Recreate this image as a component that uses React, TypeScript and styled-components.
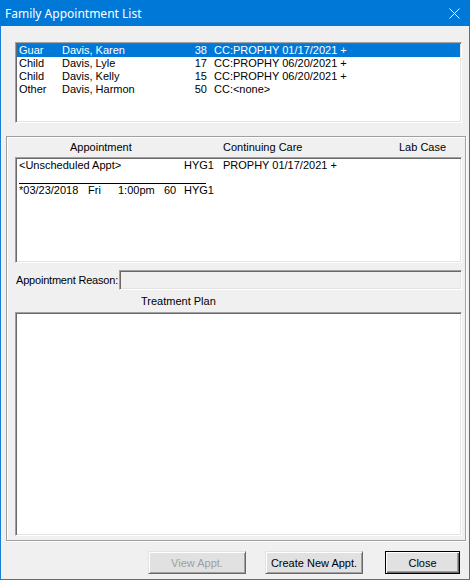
import React from 'react';
import styled, { createGlobalStyle } from 'styled-components';

const GlobalStyle = createGlobalStyle`
  html, body { margin: 0; padding: 0; background: #f0f0f0; }
  body { font-family: "Liberation Sans", Arial, sans-serif; font-size: 11px; color: #000; }
`;

const Window = styled.div`
  width: 470px;
  height: 580px;
  box-sizing: border-box;
  border: 1px solid #1a7fd4;
  border-top: none;
  background: #f0f0f0;
  display: flex;
  flex-direction: column;
`;

const TitleBar = styled.div`
  height: 26px;
  margin: 0 -1px;
  background: #0078d7;
  color: #fff;
  display: flex;
  align-items: center;
  justify-content: space-between;
  padding: 0 10px 0 5px;
  font-family: "Noto Sans", "Open Sans", sans-serif;
  font-size: 12px;
  flex-shrink: 0;
`;

const CloseGlyph = styled.svg`
  width: 11px;
  height: 11px;
`;

const Body = styled.div`
  display: flex;
  flex-direction: column;
  padding-top: 16px;
`;

// sunken 2px client-edge used by every list and edit box
const Sunken = styled.div<{ $w?: number; $h: number; $bg?: string }>`
  box-sizing: border-box;
  width: ${(p) => (p.$w ? `${p.$w}px` : 'auto')};
  height: ${(p) => p.$h}px;
  background: ${(p) => p.$bg ?? '#fff'};
  border: 1px solid;
  border-color: #a0a0a0 #fff #fff #a0a0a0;
  box-shadow: inset 1px 1px 0 #696969, inset -1px -1px 0 #e3e3e3;
  padding: 1px;
  overflow: hidden;
`;

const FamilyList = styled(Sunken)`
  margin-left: 14px;
`;

const Row = styled.div<{ $selected?: boolean }>`
  display: flex;
  height: 13px;
  line-height: 13px;
  white-space: nowrap;
  padding-left: 2px;
  background: ${(p) => (p.$selected ? '#0078d7' : 'transparent')};
  color: ${(p) => (p.$selected ? '#fff' : '#000')};
`;

const Cell = styled.span<{ $w?: number; $right?: boolean; $pad?: number }>`
  display: inline-block;
  width: ${(p) => (p.$w ? `${p.$w}px` : 'auto')};
  padding-left: ${(p) => p.$pad ?? 0}px;
  text-align: ${(p) => (p.$right ? 'right' : 'left')};
  flex-shrink: 0;
`;

const GroupBox = styled.div`
  box-sizing: border-box;
  width: 460px;
  height: 405px;
  margin: 13px 0 0 5px;
  border: 1px solid #a0a0a0;
  box-shadow: inset 1px 1px 0 #fff, 1px 1px 0 #fff;
  padding: 0 0 0 8px;
  display: flex;
  flex-direction: column;
`;

const HeaderRow = styled.div`
  display: flex;
  height: 20px;
  padding-top: 4px;
  box-sizing: border-box;
  line-height: 13px;
  white-space: nowrap;
`;

const ApptList = styled(Sunken)`
  padding: 1px;
`;

const Separator = styled.div`
  width: 187px;
  height: 1px;
  background: #000;
  margin: 11px 0 0 2px;
`;

const ReasonRow = styled.div`
  display: flex;
  align-items: center;
  width: 447px;
  margin-top: 7px;
`;

const ReasonLabel = styled.span`
  line-height: 13px;
  white-space: nowrap;
  padding: 1px 1px 0 1px;
  letter-spacing: -0.2px;
`;

const ReasonBox = styled(Sunken)`
  flex: 1;
`;

const PlanLabel = styled.div`
  height: 22px;
  box-sizing: border-box;
  padding: 5px 0 0 126px;
  line-height: 13px;
`;

const ButtonBar = styled.div`
  display: flex;
  margin: 10px 0 0 147px;
`;

const Button = styled.button<{ $w: number; $gap?: number; $default?: boolean }>`
  box-sizing: border-box;
  width: ${(p) => p.$w}px;
  height: 23px;
  margin-left: ${(p) => p.$gap ?? 0}px;
  padding: 0;
  background: #e1e1e1;
  font-family: "Liberation Sans", Arial, sans-serif;
  font-size: 11px;
  color: #000;
  border: 1px solid;
  border-color: ${(p) => (p.$default ? '#000' : '#e3e3e3 #696969 #696969 #e3e3e3')};
  box-shadow: ${(p) =>
    p.$default
      ? 'inset 1px 1px 0 #fff, inset -1px -1px 0 #696969, inset -2px -2px 0 #a0a0a0'
      : 'inset 1px 1px 0 #fff, inset -1px -1px 0 #a0a0a0'};
  &:disabled { color: #a0a0a0; }
`;

const members = [
  { rel: 'Guar', name: 'Davis, Karen', age: 38, cc: 'CC:PROPHY 01/17/2021 +' },
  { rel: 'Child', name: 'Davis, Lyle', age: 17, cc: 'CC:PROPHY 06/20/2021 +' },
  { rel: 'Child', name: 'Davis, Kelly', age: 15, cc: 'CC:PROPHY 06/20/2021 +' },
  { rel: 'Other', name: 'Davis, Harmon', age: 50, cc: 'CC:<none>' },
];

export default function App() {
  return (
    <>
      <GlobalStyle />
      <Window>
        <TitleBar>
          <span>Family Appointment List</span>
          <CloseGlyph viewBox="0 0 11 11">
            <path d="M0.5 0.5 L10.5 10.5 M10.5 0.5 L0.5 10.5" stroke="#fff" strokeWidth="1" />
          </CloseGlyph>
        </TitleBar>
        <Body>
          <FamilyList $w={447} $h={81}>
            {members.map((m, i) => (
              <Row key={m.name} $selected={i === 0}>
                <Cell $w={43}>{m.rel}</Cell>
                <Cell $w={120}>{m.name}</Cell>
                <Cell $w={25} $right>{m.age}</Cell>
                <Cell $pad={7}>{m.cc}</Cell>
              </Row>
            ))}
          </FamilyList>

          <GroupBox>
            <HeaderRow>
              <Cell $w={55} />
              <Cell $w={153}>Appointment</Cell>
              <Cell $w={176}>Continuing Care</Cell>
              <Cell>Lab Case</Cell>
            </HeaderRow>
            <ApptList $w={447} $h={106}>
              <Row>
                <Cell $w={165}>&lt;Unscheduled Appt&gt;</Cell>
                <Cell $w={39}>HYG1</Cell>
                <Cell>PROPHY 01/17/2021 +</Cell>
              </Row>
              <Separator />
              <Row>
                <Cell $w={69}>*03/23/2018</Cell>
                <Cell $w={30}>Fri</Cell>
                <Cell $w={46}>1:00pm</Cell>
                <Cell $w={20}>60</Cell>
                <Cell>HYG1</Cell>
              </Row>
            </ApptList>

            <ReasonRow>
              <ReasonLabel>Appointment Reason:</ReasonLabel>
              <ReasonBox $h={20} $bg="#f0f0f0" />
            </ReasonRow>

            <PlanLabel>Treatment Plan</PlanLabel>
            <Sunken $w={447} $h={224} />
          </GroupBox>

          <ButtonBar>
            <Button $w={98} disabled>View Appt.</Button>
            <Button $w={98} $gap={19}>Create New Appt.</Button>
            <Button $w={75} $gap={22} $default>Close</Button>
          </ButtonBar>
        </Body>
      </Window>
    </>
  );
}
